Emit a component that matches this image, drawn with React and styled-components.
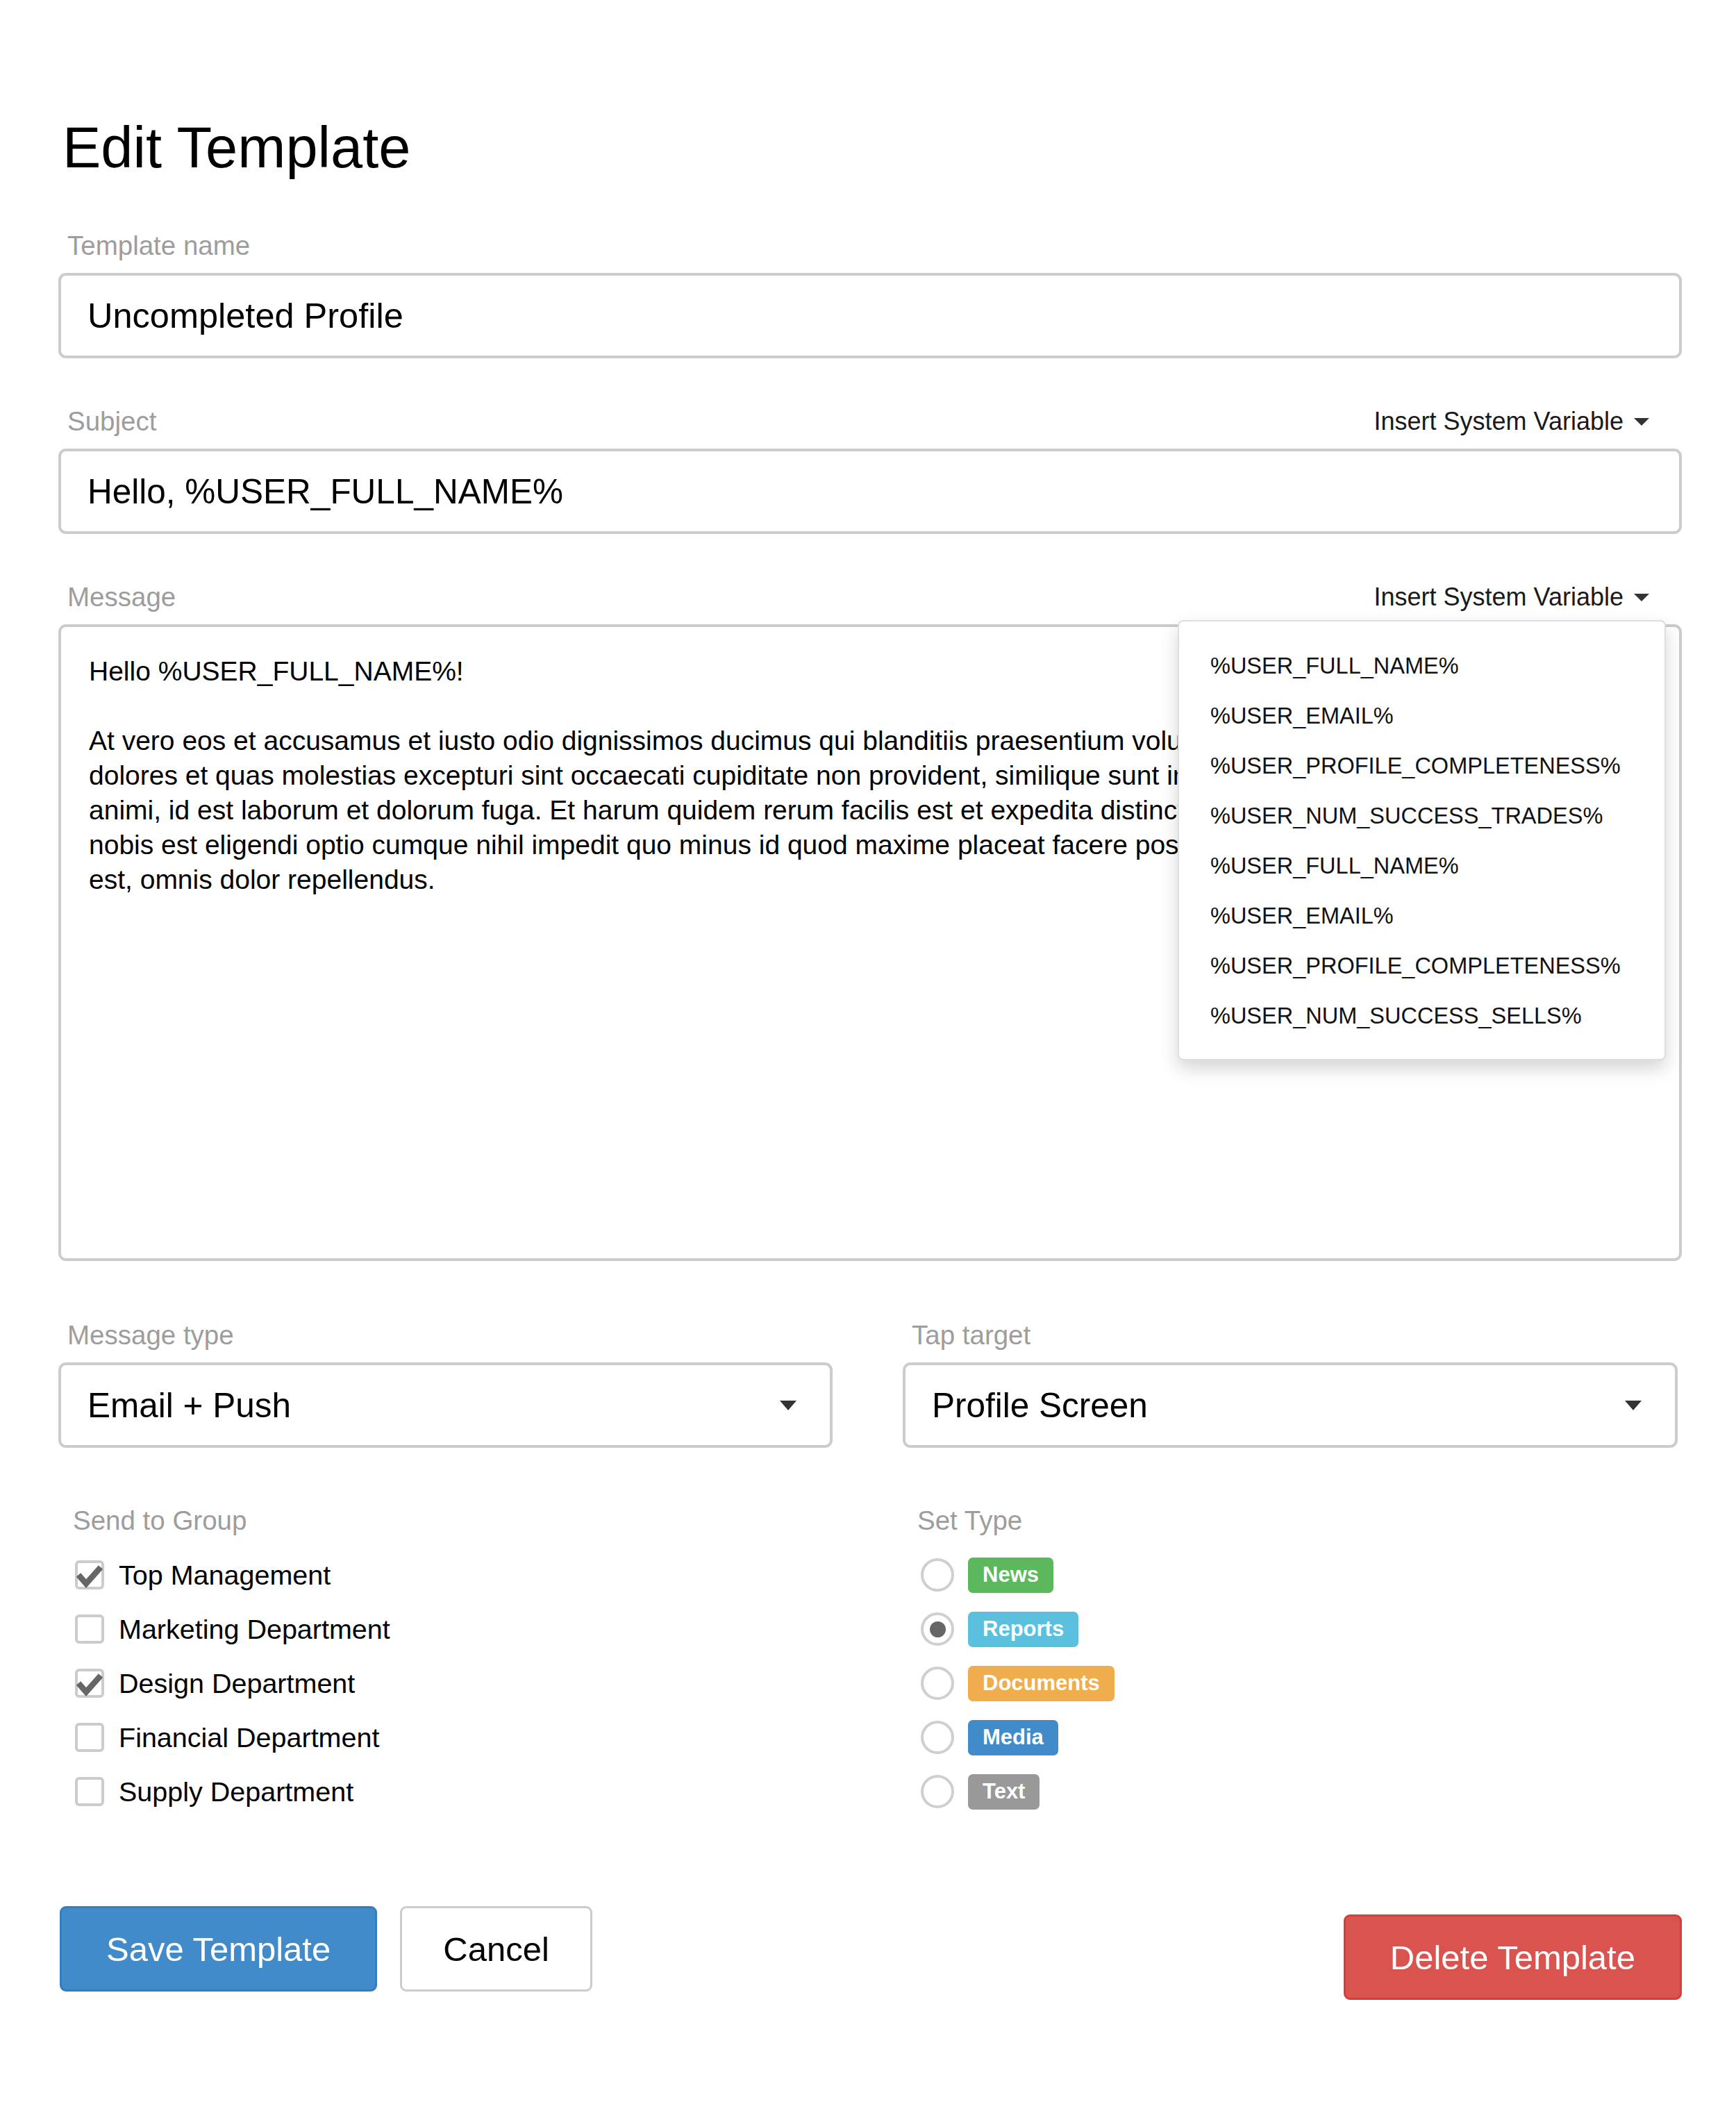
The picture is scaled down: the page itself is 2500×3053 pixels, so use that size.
import React from 'react';
import styled, { createGlobalStyle } from 'styled-components';

const GlobalStyle = createGlobalStyle`
  html, body {
    margin: 0;
    padding: 0;
    background: #fff;
  }
  body {
    font-family: "Liberation Sans", Arial, sans-serif;
    color: #000;
  }
`;

const Page = styled.div`
  width: 2338px;
  padding: 164px 0 150px 84px;
`;

const Title = styled.h1`
  margin: 0 0 70px;
  padding-left: 6px;
  font-size: 83px;
  line-height: 98px;
  font-weight: 400;
  color: #000;
`;

const Field = styled.div`
  position: relative;
  margin-bottom: ${p => p.$gap || 69}px;
`;

const LabelRow = styled.div`
  display: flex;
  align-items: center;
  justify-content: space-between;
  height: 44px;
  margin-bottom: 17px;
`;

const Label = styled.div`
  font-size: 38.5px;
  line-height: 44px;
  color: #9d9d9d;
  padding-left: 13px;
`;

const VarToggle = styled.div`
  display: flex;
  align-items: center;
  gap: 15px;
  font-size: 36px;
  color: #1a1a1a;
  padding-right: 47px;
`;

const Caret = styled.span`
  width: 0;
  height: 0;
  border-left: ${p => p.$w / 2}px solid transparent;
  border-right: ${p => p.$w / 2}px solid transparent;
  border-top: ${p => p.$h}px solid #333;
`;

const Input = styled.div`
  box-sizing: border-box;
  height: 123px;
  border: 4px solid #ccc;
  border-radius: 11px;
  padding: 0 38px;
  display: flex;
  align-items: center;
  font-size: ${p => p.$size || 50}px;
  color: #000;
`;

const Select = styled(Input)`
  justify-content: space-between;
  padding-right: 48px;
`;

const TextArea = styled.div`
  box-sizing: border-box;
  height: 917px;
  border: 4px solid #ccc;
  border-radius: 11px;
  padding: 39px 40px;
  font-size: 39px;
  line-height: 50px;
  overflow: hidden;
`;

const Line = styled.div`
  white-space: nowrap;
  min-height: 50px;
`;

const Menu = styled.div`
  position: absolute;
  top: 55px;
  right: 23px;
  width: 703px;
  box-sizing: border-box;
  background: #fff;
  border: 2px solid rgba(0, 0, 0, 0.13);
  border-radius: 8px;
  box-shadow: 0 12px 26px rgba(0, 0, 0, 0.17);
  padding: 28px 0 26px;
  z-index: 5;
`;

const MenuItem = styled.div`
  font-size: 32.5px;
  line-height: 72px;
  padding-left: 45px;
  color: #111;
  white-space: nowrap;
`;

const TwoCols = styled.div`
  display: grid;
  grid-template-columns: 1115px 1116px;
  column-gap: 101px;
  margin-bottom: ${p => p.$gap || 0}px;
`;

const GroupCol = styled.div`
  padding-left: 8px;
`;

const OptionList = styled.div`
  display: flex;
  flex-direction: column;
  padding-left: 16px;
`;

const OptionRow = styled.div`
  display: flex;
  align-items: center;
  height: 78px;
  gap: ${p => p.$gap || 20}px;
  font-size: 39.5px;
  color: #000;
`;

const CheckBox = styled.span`
  box-sizing: border-box;
  width: 42px;
  height: 42px;
  border: 4px solid #ccc;
  border-radius: 6px;
  display: flex;
  align-items: center;
  justify-content: center;
  flex: none;
`;

const Radio = styled.span`
  box-sizing: border-box;
  width: 48px;
  height: 48px;
  margin-left: 2px;
  border: 4px solid #cfcfcf;
  border-radius: 50%;
  display: flex;
  align-items: center;
  justify-content: center;
  flex: none;

  &::after {
    content: '';
    display: ${p => (p.$on ? 'block' : 'none')};
    width: 23px;
    height: 23px;
    border-radius: 50%;
    background: #666;
  }
`;

const Badge = styled.span`
  display: inline-flex;
  align-items: center;
  height: 51px;
  padding: 0 21px;
  border-radius: 7px;
  background: ${p => p.$color};
  color: #fff;
  font-size: 31px;
  font-weight: 700;
`;

const Actions = styled.div`
  display: flex;
  align-items: flex-start;
  gap: 33px;
  margin-top: 126px;
  padding-left: 2px;
`;

const Button = styled.button`
  box-sizing: border-box;
  height: 123px;
  padding: 0 ${p => p.$pad || 64}px;
  font-family: inherit;
  font-size: 49px;
  border-radius: 9px;
  border: 3px solid ${p => p.$border};
  background: ${p => p.$bg};
  color: ${p => p.$fg};
  margin-top: ${p => p.$offset || 0}px;
  margin-left: ${p => (p.$push ? 'auto' : '0')};
  cursor: pointer;
`;

const CheckMark = () => (
  <svg width="34" height="34" viewBox="0 0 34 34" style={{ overflow: 'visible' }}>
    <path d="M1 17 L12 29.5 L33 6" fill="none" stroke="#666" strokeWidth="8.5" />
  </svg>
);

const variables = [
  '%USER_FULL_NAME%',
  '%USER_EMAIL%',
  '%USER_PROFILE_COMPLETENESS%',
  '%USER_NUM_SUCCESS_TRADES%',
  '%USER_FULL_NAME%',
  '%USER_EMAIL%',
  '%USER_PROFILE_COMPLETENESS%',
  '%USER_NUM_SUCCESS_SELLS%',
];

const messageLines = [
  'Hello %USER_FULL_NAME%!',
  '',
  'At vero eos et accusamus et iusto odio dignissimos ducimus qui blanditiis praesentium voluptatum deleniti atque corrupti quos',
  'dolores et quas molestias excepturi sint occaecati cupiditate non provident, similique sunt in culpa qui officia deserunt mollitia',
  'animi, id est laborum et dolorum fuga. Et harum quidem rerum facilis est et expedita distinctio. Nam libero tempore, cum soluta',
  'nobis est eligendi optio cumque nihil impedit quo minus id quod maxime placeat facere possimus, omnis voluptas assumenda',
  'est, omnis dolor repellendus.',
];

const groups = [
  { name: 'Top Management', checked: true },
  { name: 'Marketing Department', checked: false },
  { name: 'Design Department', checked: true },
  { name: 'Financial Department', checked: false },
  { name: 'Supply Department', checked: false },
];

const types = [
  { name: 'News', color: '#5cb85c' },
  { name: 'Reports', color: '#5bc0de', on: true },
  { name: 'Documents', color: '#f0ad4e' },
  { name: 'Media', color: '#428bca' },
  { name: 'Text', color: '#999' },
];

const InsertVariable = () => (
  <VarToggle>
    Insert System Variable
    <Caret $w={22} $h={11} />
  </VarToggle>
);

export default function App() {
  return (
    <Page>
      <GlobalStyle />
      <Title>Edit Template</Title>

      <Field>
        <LabelRow>
          <Label>Template name</Label>
        </LabelRow>
        <Input $size={50.5}>Uncompleted Profile</Input>
      </Field>

      <Field>
        <LabelRow>
          <Label>Subject</Label>
          <InsertVariable />
        </LabelRow>
        <Input $size={49.5}>Hello, %USER_FULL_NAME%</Input>
      </Field>

      <Field $gap={85}>
        <LabelRow>
          <Label>Message</Label>
          <InsertVariable />
        </LabelRow>
        <TextArea>
          {messageLines.map((line, i) => (
            <Line key={i}>{line}</Line>
          ))}
        </TextArea>
        <Menu>
          {variables.map((v, i) => (
            <MenuItem key={i}>{v}</MenuItem>
          ))}
        </Menu>
      </Field>

      <TwoCols $gap={83}>
        <div>
          <LabelRow>
            <Label>Message type</Label>
          </LabelRow>
          <Select $size={49.5}>
            Email + Push
            <Caret $w={24} $h={14} />
          </Select>
        </div>
        <div>
          <LabelRow>
            <Label>Tap target</Label>
          </LabelRow>
          <Select $size={49.5}>
            Profile Screen
            <Caret $w={24} $h={14} />
          </Select>
        </div>
      </TwoCols>

      <TwoCols>
        <GroupCol>
          <LabelRow>
            <Label>Send to Group</Label>
          </LabelRow>
          <OptionList>
            {groups.map(g => (
              <OptionRow key={g.name} $gap={21}>
                <CheckBox>{g.checked && <CheckMark />}</CheckBox>
                {g.name}
              </OptionRow>
            ))}
          </OptionList>
        </GroupCol>
        <GroupCol>
          <LabelRow>
            <Label>Set Type</Label>
          </LabelRow>
          <OptionList>
            {types.map(t => (
              <OptionRow key={t.name} $gap={20}>
                <Radio $on={t.on} />
                <Badge $color={t.color}>{t.name}</Badge>
              </OptionRow>
            ))}
          </OptionList>
        </GroupCol>
      </TwoCols>

      <Actions>
        <Button $bg="#428bca" $border="#357ebd" $fg="#fff" $pad={64}>Save Template</Button>
        <Button $bg="#fff" $border="#ccc" $fg="#000" $pad={59}>Cancel</Button>
        <Button $bg="#d9534f" $border="#d43f3a" $fg="#fff" $offset={12} $push>
          Delete Template
        </Button>
      </Actions>
    </Page>
  );
}
